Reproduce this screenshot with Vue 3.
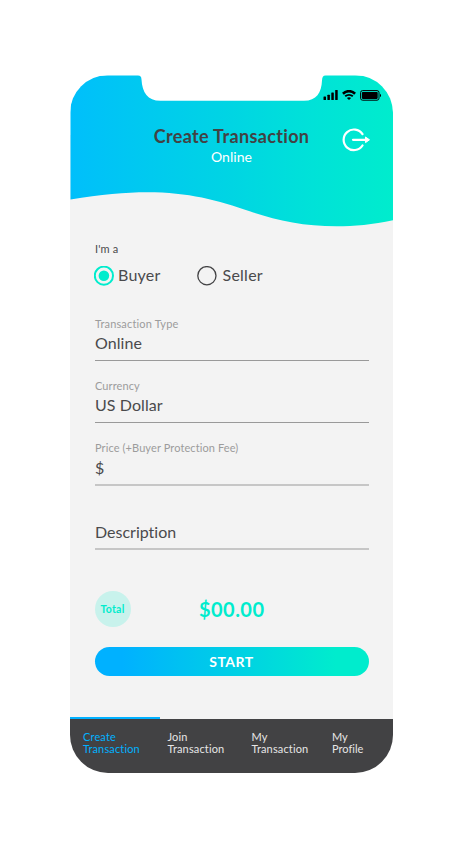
<script setup>
import { ref } from 'vue'

const role = ref('Buyer')
const roles = ['Buyer', 'Seller']
const fields = [
  { label: 'Transaction Type', value: 'Online', kind: 'type' },
  { label: 'Currency', value: 'US Dollar', kind: 'currency' },
  { label: 'Price (+Buyer Protection Fee)', value: '$', kind: 'price' },
  { label: '', value: 'Description', kind: 'description' },
]
const tabs = [
  { first: 'Create', second: 'Transaction' },
  { first: 'Join', second: 'Transaction' },
  { first: 'My', second: 'Transaction' },
  { first: 'My', second: 'Profile' },
]
</script>

<template>
  <main class="page">
    <div class="phone">
      <header class="header">
        <svg class="backdrop" viewBox="0 0 323 152" aria-hidden="true">
          <defs>
            <linearGradient id="sky" x1="0" y1="0" x2="1" y2="0">
              <stop offset="0" stop-color="#00bffb" />
              <stop offset="0.5" stop-color="#00d5e3" />
              <stop offset="0.75" stop-color="#00e2d8" />
              <stop offset="1" stop-color="#00eccd" />
            </linearGradient>
          </defs>
          <path
            transform="translate(0.500 0.500)"
            fill="url(#sky)"
            d="M0 124V36C0 13 12 0 36 0H67.500C70 0 70.800 1 71 4C71.800 17 77 25.300 90 25.300H233.500C246 25.300 251 17 251.500 5C251.700 1.500 252.500 0 255 0H286.500C310 0 322.500 13 322.500 36V144.700C265 157 218 149 180 136C130 118.500 87 109.500 0 124Z"
          />
        </svg>
        <div class="status">
          <svg class="signal" viewBox="0 0 15 10" fill="#000">
            <rect x="0.500" y="6.500" width="2.500" height="3.500" rx="0.500" />
            <rect x="4.400" y="4.700" width="2.500" height="5.300" rx="0.500" />
            <rect x="8.300" y="2.600" width="2.500" height="7.400" rx="0.500" />
            <rect x="12.200" y="0" width="2.500" height="10" rx="0.500" />
          </svg>
          <svg class="wifi" viewBox="0 0 14 10" fill="none" stroke="#000">
            <path d="M.9 3.700C4.400.4 9.600.4 13.100 3.700" stroke-width="2.700" />
            <path d="M3.200 6.300C5.400 4.400 8.600 4.400 10.800 6.300" stroke-width="1.900" />
            <path d="M4.900 7.900C6.200 7 7.800 7 9.100 7.900L7 10Z" fill="#000" stroke="none" />
          </svg>
          <svg class="battery" viewBox="0 0 22 11">
            <rect x="0.600" y="0.600" width="18.400" height="9.600" rx="2" fill="none" stroke="#000" stroke-width="1" />
            <rect x="1.900" y="1.900" width="15.800" height="7" rx="0.800" fill="#000" />
            <path d="M20 3.700C21.400 4.300 21.400 6.500 20 7.100Z" fill="#000" />
          </svg>
        </div>
        <div class="heading">
          <h1>Create Transaction</h1>
          <p>Online</p>
        </div>
        <svg class="exit" viewBox="0 0 30 24" fill="none" stroke="#fff" stroke-width="2.200" stroke-linecap="round">
          <path d="M21.500 6.100A10.300 10.300 0 1 0 21.500 17.500" />
          <path d="M12 11.800H25.500" />
          <path d="M24.800 9.200L28.500 11.800L24.800 14.400Z" fill="#fff" stroke-width="1" stroke-linejoin="round" />
        </svg>
      </header>

      <section class="form">
        <p class="prompt">I'm a</p>
        <div class="roles">
          <label v-for="r in roles" :key="r" class="role" @click="role = r">
            <svg class="dot" :class="{ on: role === r }" viewBox="0 0 20 20">
              <circle class="ring" cx="9.900" cy="9.700" r="9.100" />
              <circle v-if="role === r" class="core" cx="9.900" cy="9.700" r="5.300" />
            </svg>
            <span class="name">{{ r }}</span>
          </label>
        </div>

        <div v-for="f in fields" :key="f.kind" class="field" :class="f.kind">
          <span v-if="f.label" class="label">{{ f.label }}</span>
          <span class="value">{{ f.value }}</span>
        </div>

        <div class="total">
          <span class="badge">Total</span>
          <span class="amount">$00.00</span>
        </div>
        <button class="start" type="button">START</button>
      </section>

      <nav class="tabs">
        <a v-for="(t, i) in tabs" :key="i" class="tab" :class="{ active: i === 0 }">
          <span>{{ t.first }}</span>
          <span>{{ t.second }}</span>
        </a>
      </nav>
    </div>
  </main>
</template>

<style>
body {
  background: #fff;
}
</style>

<style scoped>
.page {
  box-sizing: border-box;
  height: 847px;
  padding: 75px 0 0 70px;
  font-family: Lato, "Open Sans", sans-serif;
  font-variant-ligatures: none;
  color: #4a4a4c;
}
.phone {
  display: flex;
  flex-direction: column;
  width: 323px;
  height: 697.500px;
  border-radius: 38px;
  overflow: hidden;
  background: linear-gradient(#fff 0 60px, #f3f3f3 60px);
}
h1, p {
  margin: 0;
}
.header {
  position: relative;
  height: 152px;
  flex: none;
}
.backdrop {
  position: absolute;
  inset: 0;
  width: 323px;
  height: 152px;
}
.header::before {
  content: "";
  position: absolute;
  inset: 60px 0 0;
  background: #f3f3f3;
}
.status {
  position: relative;
  display: flex;
  justify-content: flex-end;
  align-items: center;
  gap: 4px;
  height: 10px;
  padding: 15px 11px 0 0;
}
.signal { width: 15px; height: 10px; }
.wifi { width: 14px; height: 10px; }
.battery { width: 22px; height: 11px; }
.heading {
  position: relative;
  text-align: center;
  padding-top: 24px;
}
h1 {
  color: #424244;
  font-size: 18px;
  line-height: 24px;
  font-weight: 700;
  letter-spacing: 0.350px;
}
.heading p {
  font-size: 14px;
  line-height: 18px;
  color: #fff;
  letter-spacing: 0.050px;
}
.exit {
  position: absolute;
  top: 53px;
  right: 22px;
  width: 30px;
  height: 24px;
}
.form {
  display: flex;
  flex-direction: column;
  width: 274px;
  margin-left: 25px;
  height: 492px;
}
.prompt {
  margin-top: 14px;
  font-size: 11px;
  line-height: 16px;
  letter-spacing: 0.150px;
}
.roles {
  display: flex;
  margin: 9px 0 0 -1px;
  height: 20px;
}
.role {
  display: flex;
  align-items: center;
  width: 103px;
  gap: 4px;
}
.role + .role { gap: 5.500px; }
.dot {
  width: 20px;
  height: 20px;
  fill: none;
  stroke: #424244;
  stroke-width: 1.300px;
}
.dot.on {
  stroke: #00eccd;
  stroke-width: 2px;
}
.core {
  fill: #00eccd;
  stroke: none;
}
.name {
  font-size: 16px;
  line-height: 20px;
  margin-top: -2px;
  letter-spacing: 0.250px;
}
.field {
  display: flex;
  flex-direction: column;
  justify-content: flex-end;
  box-sizing: border-box;
  flex: none;
  border-bottom: 1px solid #999;
}
.label {
  font-size: 11px;
  line-height: 14px;
  color: #9c9c9c;
  letter-spacing: 0.100px;
}
.value {
  margin: 2px 0 7px;
  font-size: 16px;
  line-height: 20px;
  letter-spacing: 0.080px;
}
.type { height: 75px; }
.type .label { letter-spacing: 0.160px; }
.currency { height: 62px; }
.price { height: 63px; border-bottom: 2px solid #c6c6c6; }
.description { height: 64px; border-bottom: 2px solid #c6c6c6; }
.price .value, .description .value { margin: 3px 0 6px; }
.description .value { letter-spacing: 0; }
.total {
  display: flex;
  align-items: center;
  margin: 41px 0 0 -0.500px;
  height: 36px;
}
.badge {
  width: 36px;
  height: 36px;
  border-radius: 50%;
  background: #c8f2ec;
  color: #00eccd;
  font-size: 10.500px;
  font-weight: 700;
  line-height: 36px;
  text-align: center;
  letter-spacing: 0.250px;
}
.amount {
  margin-left: 68.500px;
  color: #00eccd;
  font-size: 20px;
  font-weight: 700;
  letter-spacing: 0.450px;
}
.start {
  margin-top: 20px;
  height: 29px;
  padding: 0 1px 0 0;
  border: 0;
  border-radius: 15px;
  background: linear-gradient(90deg, #00b1ff 10%, #00eccd 88%);
  color: #fff;
  font-family: inherit;
  font-size: 14px;
  font-weight: 700;
  line-height: 28px;
  letter-spacing: 0.500px;
}
.tabs {
  flex: 1;
  display: grid;
  grid-template-columns: 84.500px 84px 80.500px 60px;
  padding-left: 13px;
  background: #424244;
  color: #e6e6e6;
  position: relative;
}
.tabs::before {
  content: "";
  position: absolute;
  left: 0;
  top: -2px;
  width: 90px;
  height: 2px;
  background: #00b1ff;
}
.tab {
  display: flex;
  flex-direction: column;
  padding-top: 12px;
  font-size: 11px;
  line-height: 12px;
  letter-spacing: 0.150px;
}
.tab:last-child { letter-spacing: 0; }
.tab.active { color: #00b1ff; }
</style>
